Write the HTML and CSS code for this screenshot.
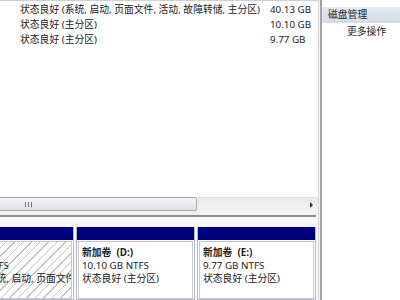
FILE: index.html
```html
<!DOCTYPE html>
<html lang="zh-CN">
<head>
  <meta charset="UTF-8">
  <title>磁盘管理</title>
  <link rel="stylesheet" href="styles.css">
</head>
<body>
  <div class="window">
    <div class="main">
      <div class="volume-list">
        <div class="list-head"><div class="head-cell"></div></div>
        <div class="row">
          <span class="c-status">状态良好 (系统, 启动, 页面文件, 活动, 故障转储, 主分区)</span>
          <span class="c-cap">40.13 GB</span>
        </div>
        <div class="row">
          <span class="c-status">状态良好 (主分区)</span>
          <span class="c-cap">10.10 GB</span>
        </div>
        <div class="row">
          <span class="c-status">状态良好 (主分区)</span>
          <span class="c-cap">9.77 GB</span>
        </div>
      </div>

      <div class="hscroll">
        <div class="thumb"><span class="grip"></span></div>
        <div class="track"><span class="arrow"></span></div>
      </div>
      <div class="pane-gap"></div>
      <div class="pane-sep"></div>

      <div class="disk-view">
        <div class="parts">
          <div class="part part-sys">
            <div class="part-head"></div>
            <div class="part-body">
              <div class="p-title">(C:)</div>
              <div>40.13 GB NTFS</div>
              <div>状态良好 (系统, 启动, 页面文件, 活动, 故障转储, 主分区)</div>
            </div>
          </div>
          <div class="part">
            <div class="part-head"></div>
            <div class="part-body">
              <div class="p-title">新加卷&nbsp;&nbsp;(D:)</div>
              <div>10.10 GB NTFS</div>
              <div>状态良好 (主分区)</div>
            </div>
          </div>
          <div class="part">
            <div class="part-head"></div>
            <div class="part-body">
              <div class="p-title">新加卷&nbsp;&nbsp;(E:)</div>
              <div>9.77 GB NTFS</div>
              <div>状态良好 (主分区)</div>
            </div>
          </div>
        </div>
      </div>
    </div>

    <div class="splitter"></div>

    <div class="actions">
      <div class="act-head">磁盘管理</div>
      <div class="act-item">更多操作</div>
    </div>
  </div>
</body>
</html>
```

FILE: styles.css
```css
body {
  margin: 0;
  font-family: "Noto Sans", "Noto Sans CJK SC", sans-serif;
  font-size: 9.8px;
  color: #222;
  background: #fff;
}
.window {
  display: flex;
  width: 400px;
  height: 300px;
  overflow: hidden;
}
.main {
  width: 318px;
  flex: 0 0 318px;
  display: flex;
  flex-direction: column;
  overflow: hidden;
}

/* volume list */
.volume-list {
  height: 197px;
  flex: 0 0 197px;
  background: #fff;
}
.list-head {
  height: 2px;
  border-top: 1px solid #cfcfcf;
  display: flex;
}
.head-cell {
  width: 262px;
  border-right: 1px solid #cfcfcf;
}
.row {
  display: flex;
  height: 15px;
  line-height: 14px;
  white-space: nowrap;
}
.c-status {
  width: 243px;
  padding-left: 20px;
  overflow: hidden;
}
.c-cap {
  padding-left: 7px;
}

/* horizontal scrollbar */
.hscroll {
  display: flex;
  height: 14px;
  flex: 0 0 14px;
  background: #ededed;
}
.thumb {
  width: 200px;
  margin-left: -3px;
  box-sizing: border-box;
  border: 1px solid #a2a5b3;
  border-radius: 2px;
  background: linear-gradient(#f6f6f8, #dfe0e5);
  display: flex;
  align-items: center;
}
.grip {
  margin-left: 27px;
  width: 7px;
  height: 5px;
  background: repeating-linear-gradient(to right, #6d6f78 0 1px, transparent 1px 3px);
}
.track {
  flex: 1;
  margin-left: 1px;
  border-top: 1px solid #e0e0e0;
  background: linear-gradient(#eaeaea, #f2f2f2);
  display: flex;
  align-items: center;
  justify-content: flex-end;
  padding-right: 5px;
}
.arrow {
  width: 0;
  height: 0;
  border-top: 3px solid transparent;
  border-bottom: 3px solid transparent;
  border-left: 3px solid #333;
}
.pane-gap {
  height: 4px;
  flex: 0 0 4px;
  background: #f1f1f1;
}
.pane-sep {
  height: 2px;
  flex: 0 0 2px;
  width: 316px;
  background: #8e8e8e;
}

/* graphical disk view */
.disk-view {
  flex: 1;
  background: #f7f7f7;
  padding-top: 10px;
}
.parts {
  display: flex;
  gap: 2px;
  margin-left: -64px;
  height: 100%;
}
.part {
  flex: 0 0 119px;
  min-width: 0;
  overflow: hidden;
  box-sizing: border-box;
  border: 1px solid #b9b9c4;
  border-top: none;
  display: flex;
  flex-direction: column;
  background: #fff;
}
.part-sys {
  flex-basis: 138px;
}
.part-head {
  height: 13px;
  flex: 0 0 13px;
  background: #00007c;
}
.part-body {
  flex: 1;
  margin: 1px 1px 0;
  border: 1px solid #c6c6de;
  padding: 4px 3px 0;
  line-height: 13px;
  white-space: nowrap;
  overflow: hidden;
}
.part-sys .part-body {
  background: repeating-linear-gradient(135deg, #fff 0 5px, #c2c2c2 5px 6px);
}
.p-title {
  font-weight: bold;
}

/* splitter and action pane */
.splitter {
  flex: 0 0 4px;
  background: linear-gradient(to right, #d6d6d6 0 1px, #f2f2f2 1px 2px, #a3a3a3 2px 4px);
}
.actions {
  flex: 1;
  background: #fff;
  white-space: nowrap;
}
.act-head {
  margin-top: 7px;
  height: 16px;
  line-height: 16px;
  padding-left: 6px;
  background: linear-gradient(#e3e8f1, #d3dbe8);
}
.act-item {
  padding-left: 25px;
  line-height: 18px;
}
```
